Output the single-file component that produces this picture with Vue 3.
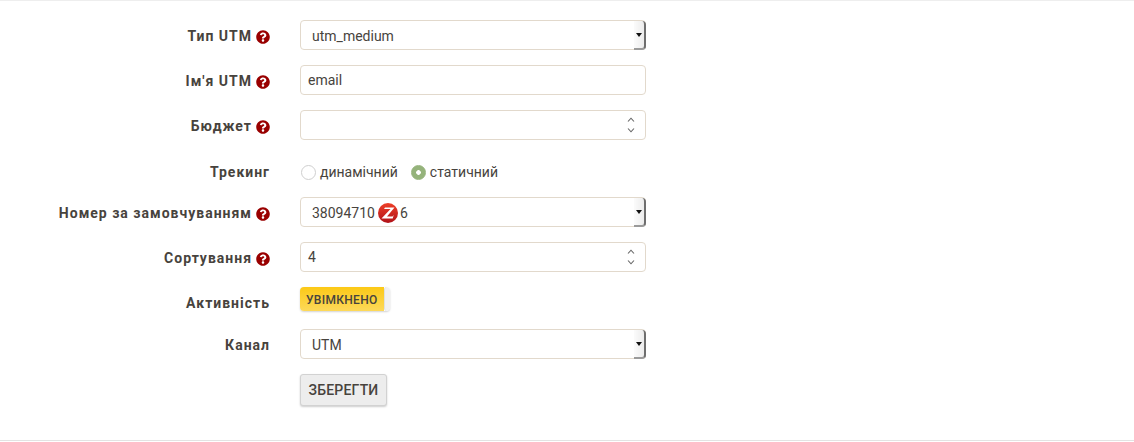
<script setup>
const help = 'M504 256c0 136.997-111.043 248-248 248S8 392.997 8 256C8 119.083 119.043 8 256 8s248 111.083 248 248zM262.655 90c-54.497 0-89.255 22.957-116.549 63.758-3.536 5.286-2.353 12.415 2.715 16.258l34.699 26.31c5.205 3.947 12.621 3.008 16.665-2.122 17.864-22.658 30.113-35.797 57.303-35.797 20.429 0 45.698 13.148 45.698 32.958 0 14.976-12.363 22.667-32.534 33.976C247.128 238.528 216 254.941 216 296v4c0 6.627 5.373 12 12 12h56c6.627 0 12-5.373 12-12v-1.333c0-28.462 83.186-29.647 83.186-106.667 0-58.002-60.165-102-116.531-102zM256 338c-25.365 0-46 20.635-46 46 0 25.364 20.635 46 46 46s46-20.636 46-46c0-25.365-20.635-46-46-46z'
</script>

<template>
  <form class="page" @submit.prevent>
    <div class="row">
      <div class="label">Тип UTM<svg class="help" viewBox="0 0 512 512"><path :d="help" /></svg></div>
      <div class="field select"><span>utm_medium</span><i class="arrow"></i></div>
    </div>
    <div class="row">
      <div class="label">Ім'я UTM<svg class="help" viewBox="0 0 512 512"><path :d="help" /></svg></div>
      <input class="field text" value="email" />
    </div>
    <div class="row">
      <div class="label">Бюджет<svg class="help" viewBox="0 0 512 512"><path :d="help" /></svg></div>
      <div class="field number"><span></span>
        <svg class="spin" viewBox="0 0 10 16"><path d="M2 4.5 5 1.2 8 4.5M2 11.5 5 14.8 8 11.5" /></svg>
      </div>
    </div>
    <div class="row radio-row">
      <div class="label">Трекинг</div>
      <div class="radios">
        <span class="radio"><i class="dot"></i>динамічний</span>
        <span class="radio"><i class="dot on"></i>статичний</span>
      </div>
    </div>
    <div class="row">
      <div class="label">Номер за замовчуванням<svg class="help" viewBox="0 0 512 512"><path :d="help" /></svg></div>
      <div class="field select">
        <span class="phone">38094710<svg class="zlogo" viewBox="0 0 20 20">
          <defs><linearGradient id="zg" x1="0" y1="0" x2="0" y2="1"><stop offset="0" stop-color="#ee3f28" /><stop offset="1" stop-color="#b01319" /></linearGradient></defs>
          <circle cx="10" cy="10" r="10" fill="url(#zg)" />
          <path d="M7 4.5h9.5L9 13.5h5.5l1.2-1.5-1 3.5H3.5l9-9.5H6z" fill="#fff" />
        </svg>6</span><i class="arrow"></i>
      </div>
    </div>
    <div class="row">
      <div class="label">Сортування<svg class="help" viewBox="0 0 512 512"><path :d="help" /></svg></div>
      <div class="field number"><span>4</span>
        <svg class="spin" viewBox="0 0 10 16"><path d="M2 4.5 5 1.2 8 4.5M2 11.5 5 14.8 8 11.5" /></svg>
      </div>
    </div>
    <div class="row toggle-row">
      <div class="label">Активність</div>
      <div class="toggle"><span class="toggle-on">УВІМКНЕНО</span><span class="toggle-knob"></span></div>
    </div>
    <div class="row">
      <div class="label">Канал</div>
      <div class="field select"><span>UTM</span><i class="arrow"></i></div>
    </div>
    <div class="row last">
      <div class="label"></div>
      <button class="save" type="button">ЗБЕРЕГТИ</button>
    </div>
  </form>
</template>

<style>
html, body { margin: 0; background: #fff; }
</style>

<style scoped>
.page {
  box-sizing: border-box;
  width: 1134px;
  height: 441px;
  padding-top: 19px;
  border-top: 1px solid #eee;
  border-bottom: 1px solid #e3e3e3;
  font-family: Roboto, "Liberation Sans", sans-serif;
  font-size: 14px;
  color: #47433d;
  background: #fff;
}
.row {
  display: grid;
  grid-template-columns: 270px 346px;
  column-gap: 30px;
  margin-bottom: 15px;
  height: 30px;
}
.row.radio-row, .row.toggle-row { height: 27px; }
.row.last { height: 32px; margin-bottom: 0; }
.label {
  box-sizing: border-box;
  display: flex;
  justify-content: flex-end;
  align-items: center;
  gap: 4px;
  height: 30px;
  padding-top: 2px;
  font-weight: 700;
  letter-spacing: 1px;
  white-space: nowrap;
}
.radio-row .label { padding-top: 4px; }
.toggle-row .label { padding-top: 2px; }
.help { width: 14px; height: 14px; fill: #990000; flex: none; margin-top: 1px; }
.field {
  box-sizing: border-box;
  width: 346px;
  height: 30px;
  border: 1px solid #e2d9cc;
  border-radius: 4px;
  background: #fff;
  display: flex;
  align-items: center;
  position: relative;
  font: inherit;
  color: inherit;
  padding: 0 7px;
  outline: none;
}
.select { padding: 2px 0 0 11px; }
.select::after {
  content: "";
  position: absolute;
  top: 0;
  right: -1px;
  bottom: -1px;
  width: 12px;
  background: linear-gradient(90deg, #fbfbfb, #ececec);
  border-right: 2px solid #6e6e6e;
  border-bottom: 2px solid #9a9a9a;
  border-radius: 0 4px 4px 0;
  box-sizing: border-box;
}
.arrow {
  position: absolute;
  z-index: 1;
  right: 3px;
  top: 12px;
  width: 0;
  height: 0;
  border-left: 3px solid transparent;
  border-right: 3px solid transparent;
  border-top: 4px solid #111;
}
.phone { display: inline-flex; align-items: center; }
.zlogo { width: 20px; height: 20px; margin: -1px 2px 0 3px; flex: none; }
.spin {
  position: absolute;
  right: 9px;
  top: 6px;
  width: 10px;
  height: 16px;
  fill: none;
  stroke: #666;
  stroke-width: 1.1;
}
.radios {
  display: flex;
  align-items: center;
  gap: 12px;
  height: 30px;
  padding-top: 4px;
  box-sizing: border-box;
}
.radio { display: inline-flex; align-items: center; gap: 4px; }
.dot {
  box-sizing: border-box;
  display: inline-block;
  width: 15px;
  height: 15px;
  border: 1px solid #cfcfcf;
  border-radius: 50%;
  background: #fff;
  margin-left: 1px;
  margin-top: 1px;
}
.dot.on {
  background: radial-gradient(circle, #fff 0 2px, #95b37b 2.6px);
  border-color: #95b37b;
}
.toggle {
  box-sizing: border-box;
  display: flex;
  width: 90px;
  height: 24px;
  border-radius: 4px;
  overflow: hidden;
  box-shadow: 0 1px 2px rgba(0, 0, 0, 0.18);
}
.toggle-on {
  width: 84px;
  background: linear-gradient(#fcc916, #fdd95a);
  font-size: 12px;
  font-weight: 500;
  letter-spacing: 0.3px;
  line-height: 26px;
  padding-left: 6px;
  box-sizing: border-box;
  color: #47433d;
}
.toggle-knob {
  flex: 1;
  background: #f1f1f1;
  border-left: 1px solid #e0e0e0;
  border-radius: 3px;
}
.save {
  box-sizing: border-box;
  width: 87px;
  height: 32px;
  border: 1px solid #d2d2d2;
  border-radius: 3px;
  background: #ededed;
  font: inherit;
  font-weight: 500;
  color: #47433d;
  letter-spacing: 0.2px;
  padding: 0;
  box-shadow: 0 1px 2px rgba(0, 0, 0, 0.2);
}
</style>
